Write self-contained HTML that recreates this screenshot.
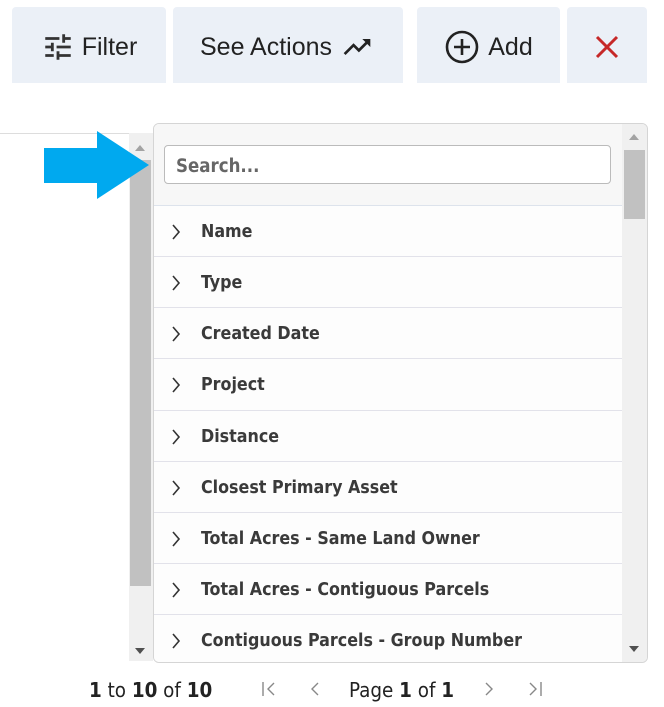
<!DOCTYPE html>
<html><head><style>
*{margin:0;padding:0;box-sizing:border-box}
body{width:664px;height:707px;background:#fff;position:relative;overflow:hidden;font-family:"Liberation Sans",sans-serif;}
.btn{position:absolute;top:7px;height:76px;padding-top:4px;background:#ebf0f7;border-radius:4px 4px 0 0;display:flex;align-items:center;justify-content:center;font-size:25px;color:#222;}
.panel{position:absolute;left:153px;top:123px;width:495px;height:540px;border:1px solid #d5d5d5;border-radius:6px;background:#fff;overflow:hidden}
.head{position:absolute;left:0;top:0;width:468px;height:82px;background:#f7f7f7;border-bottom:1px solid #dde3ec}
.search{position:absolute;left:10px;top:21px;width:447px;height:39px;border:1px solid #bbb;border-radius:4px;background:#fff;font-weight:bold;font-size:18.5px;color:#666;padding:10px 11px 0;font-family:"DejaVu Sans Condensed","Liberation Sans",sans-serif;}
.row{position:absolute;left:0;width:468px;height:51px;border-bottom:1px solid #e2e2ea;background:#fdfdfd;font-family:"DejaVu Sans Condensed","Liberation Sans",sans-serif;font-weight:bold;font-size:17.7px;color:#3a3a3a}
.row span{position:absolute;left:47px;top:16px}
.row svg{position:absolute;left:17px;top:18px}
.sb{position:absolute;background:#f0f0f0}
.thumb{position:absolute;background:#c1c1c1}
.up,.dn{position:absolute;width:0;height:0;border-left:5px solid transparent;border-right:5px solid transparent}
.up{border-bottom:6px solid #a3a3a3}.dn{border-top:6px solid #505050}
.pg{position:absolute;top:678px;font-size:20.4px;color:#222;font-family:"DejaVu Sans Condensed","Liberation Sans",sans-serif}
.pi{position:absolute;top:680px}
</style></head><body>
<div class="btn" style="left:12px;width:154px"><svg width="34" height="34" viewBox="0 0 24 24" style="margin-right:7px"><path d="M3 17v2h6v-2H3zM3 5v2h10V5H3zm10 16v-2h8v-2h-8v-2h-2v6h2zM7 9v2H3v2h4v2h2V9H7zm14 4v-2H11v2h10zm-6-4h2V7h4V5h-4V3h-2v6z" fill="#333"/></svg>Filter</div>
<div class="btn" style="left:173px;width:230px">See Actions<svg width="38" height="32" viewBox="0 0 24 24" style="margin-left:6px"><path d="M16 6l2.29 2.29-4.88 4.88-4-4L2 16.59 3.41 18l6-6 4 4 6.3-6.29L22 12V6z" fill="#222"/></svg></div>
<div class="btn" style="left:417px;width:143px"><svg width="36" height="36" viewBox="0 0 36 36" style="margin-right:8px"><circle cx="18" cy="18" r="15" fill="none" stroke="#222" stroke-width="2.6"/><path d="M18 10v16M10 18h16" stroke="#222" stroke-width="2.6"/></svg>Add</div>
<div class="btn" style="left:567px;width:80px"><svg width="26" height="26" viewBox="0 0 26 26"><path d="M3 3l20 20M23 3L3 23" stroke="#c62828" stroke-width="3"/></svg></div>
<div style="position:absolute;left:0;top:133px;width:130px;height:1px;background:#ddd"></div>
<div class="sb" style="left:129px;top:133px;width:24px;height:528px"></div>
<div class="thumb" style="left:130px;top:160px;width:21px;height:426px"></div>
<div class="up" style="left:135px;top:145px"></div>
<div class="dn" style="left:135px;top:648px"></div>
<svg style="position:absolute;left:44px;top:131px" width="106" height="70"><path d="M0 17H53V0L105 34 53 68V52H0z" fill="#00a9ef"/></svg>
<div class="panel">
<div class="head"><div class="search">Search...</div></div>
<div class="sb" style="left:468px;top:0;width:26px;height:540px"></div>
<div class="thumb" style="left:470px;top:26px;width:21px;height:69px"></div>
<div class="up" style="left:475px;top:10px"></div>
<div class="dn" style="left:475px;top:522px"></div>
<div class="row" style="top:82px"><svg width="10" height="16"><path d="M2 1l6 7-6 7" fill="none" stroke="#333" stroke-width="1.6"/></svg><span>Name</span></div>
<div class="row" style="top:133px"><svg width="10" height="16"><path d="M2 1l6 7-6 7" fill="none" stroke="#333" stroke-width="1.6"/></svg><span>Type</span></div>
<div class="row" style="top:184px"><svg width="10" height="16"><path d="M2 1l6 7-6 7" fill="none" stroke="#333" stroke-width="1.6"/></svg><span>Created Date</span></div>
<div class="row" style="top:235px;height:52px"><svg width="10" height="16"><path d="M2 1l6 7-6 7" fill="none" stroke="#333" stroke-width="1.6"/></svg><span>Project</span></div>
<div class="row" style="top:287px"><svg width="10" height="16"><path d="M2 1l6 7-6 7" fill="none" stroke="#333" stroke-width="1.6"/></svg><span>Distance</span></div>
<div class="row" style="top:338px"><svg width="10" height="16"><path d="M2 1l6 7-6 7" fill="none" stroke="#333" stroke-width="1.6"/></svg><span>Closest Primary Asset</span></div>
<div class="row" style="top:389px"><svg width="10" height="16"><path d="M2 1l6 7-6 7" fill="none" stroke="#333" stroke-width="1.6"/></svg><span>Total Acres - Same Land Owner</span></div>
<div class="row" style="top:440px"><svg width="10" height="16"><path d="M2 1l6 7-6 7" fill="none" stroke="#333" stroke-width="1.6"/></svg><span>Total Acres - Contiguous Parcels</span></div>
<div class="row" style="top:491px;border-bottom:none"><svg width="10" height="16"><path d="M2 1l6 7-6 7" fill="none" stroke="#333" stroke-width="1.6"/></svg><span>Contiguous Parcels - Group Number</span></div>
</div>
<div class="pg" style="left:89px"><b>1</b> to <b>10</b> of <b>10</b></div>
<svg class="pi" style="left:261px" width="16" height="18"><path d="M2 2v14M13 3l-6 6 6 6" fill="none" stroke="#888" stroke-width="1.4"/></svg>
<svg class="pi" style="left:309px" width="12" height="18"><path d="M9 3l-6 6 6 6" fill="none" stroke="#888" stroke-width="1.4"/></svg>
<div class="pg" style="left:349px">Page <b>1</b> of <b>1</b></div>
<svg class="pi" style="left:483px" width="12" height="18"><path d="M3 3l6 6-6 6" fill="none" stroke="#888" stroke-width="1.4"/></svg>
<svg class="pi" style="left:527px" width="16" height="18"><path d="M3 3l6 6-6 6M14 2v14" fill="none" stroke="#888" stroke-width="1.4"/></svg>
</body></html>
